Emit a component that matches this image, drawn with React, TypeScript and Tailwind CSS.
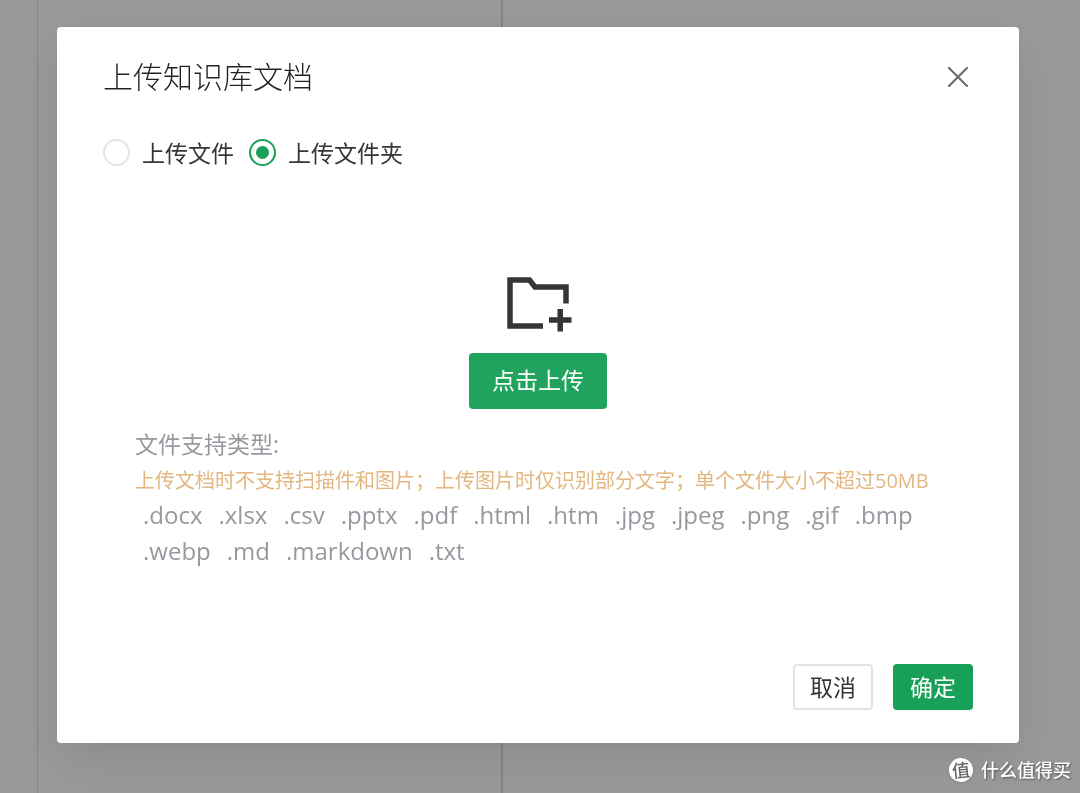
import { useState } from 'react';

const extensions = [
  '.docx', '.xlsx', '.csv', '.pptx', '.pdf', '.html', '.htm', '.jpg', '.jpeg',
  '.png', '.gif', '.bmp', '.webp', '.md', '.markdown', '.txt',
];

const modes = [
  { id: 'file', label: '上传文件' },
  { id: 'folder', label: '上传文件夹' },
];

function FolderAddIcon() {
  return (
    <svg viewBox="0 0 80 80" className="size-20" fill="none" stroke="#333639" strokeWidth="5.5" aria-hidden="true">
      <path d="M45 61H12V15H31.5L37 22H68V38.5" />
      <path d="M51 55H73.500M62.200 44V66.500" />
    </svg>
  );
}

function CloseIcon() {
  return (
    <svg viewBox="0 0 20 20" className="size-5" fill="none" stroke="#6b6d70" strokeWidth="2.2" strokeLinecap="round" aria-hidden="true">
      <path d="M1 1L19 19M19 1L1 19" />
    </svg>
  );
}

function ModePicker() {
  const [mode, setMode] = useState('folder');

  return (
    <div className="mt-9 flex gap-[15px]">
      {modes.map((item) => (
        <label key={item.id} className="flex items-center gap-3 text-[23px] leading-9 text-[#333639]">
          <input
            type="radio"
            name="mode"
            value={item.id}
            checked={mode === item.id}
            onChange={() => setMode(item.id)}
            className="size-[27px] appearance-none rounded-full border-2 border-[#e4e4ea] bg-white bg-clip-content p-[5px] checked:border-[#18a058] checked:bg-[#18a058]"
          />
          {item.label}
        </label>
      ))}
    </div>
  );
}

function UploadArea() {
  return (
    <div className="mt-[94px] flex flex-col items-center px-8">
      <FolderAddIcon />
      <button type="button" className="mt-2 h-14 rounded-sm bg-[#20a35c] px-[23px] text-[23px] text-white">
        点击上传
      </button>
      <div className="mt-4 w-full text-[#96999f]">
        <p className="text-[23px] leading-[38px]">文件支持类型:</p>
        <p className="pt-0.5 text-xl leading-8 text-[#e3b77f]">
          上传文档时不支持扫描件和图片；上传图片时仅识别部分文字；单个文件大小不超过50MB
        </p>
        <ul className="flex flex-wrap gap-x-4 px-2 text-2xl leading-9">
          {extensions.map((ext) => (
            <li key={ext}>{ext}</li>
          ))}
        </ul>
      </div>
    </div>
  );
}

function Watermark() {
  return (
    <div className="fixed right-[9px] bottom-[9px] flex items-center gap-2 text-lg font-medium text-white [text-shadow:1px_1px_2px_#555]">
      <span className="flex size-6 -rotate-6 items-center justify-center rounded-full bg-white text-lg leading-6 text-[#666] shadow [text-shadow:none]">
        值
      </span>
      什么值得买
    </div>
  );
}

export default function App() {
  return (
    <div className="flex min-h-screen bg-[#9a9a9a] font-['Open_Sans','Noto_Sans_CJK_SC',sans-serif]">
      <div className="w-[38px] border-r border-[#858585]" />
      <div className="w-[465px] border-r-2 border-[#858585]" />

      <div className="fixed inset-0 flex items-center pr-[61px] pb-6 pl-[57px]">
        <section
          role="dialog"
          aria-labelledby="dialog-title"
          className="w-full rounded bg-white px-[46px] pt-7 pb-[33px] shadow-[0_10px_27px_-15px_rgba(0,0,0,0.08),0_15px_46px_0_rgba(0,0,0,0.05),0_20px_80px_27px_rgba(0,0,0,0.03)]"
        >
          <header className="flex items-center justify-between">
            <h1 id="dialog-title" className="text-3xl leading-[44px] font-light text-[#1f2225]">
              上传知识库文档
            </h1>
            <button type="button" aria-label="关闭" className="p-[5px]">
              <CloseIcon />
            </button>
          </header>

          <ModePicker />
          <UploadArea />

          <footer className="mt-[95px] flex justify-end gap-5 text-[23px]">
            <button type="button" className="h-[46px] rounded-sm border-2 border-[#e2e2e8] px-[15px] leading-9 text-[#333639]">
              取消
            </button>
            <button type="button" className="h-[46px] rounded-sm bg-[#18a058] px-[17px] leading-9 text-white">
              确定
            </button>
          </footer>
        </section>
      </div>

      <Watermark />
    </div>
  );
}
